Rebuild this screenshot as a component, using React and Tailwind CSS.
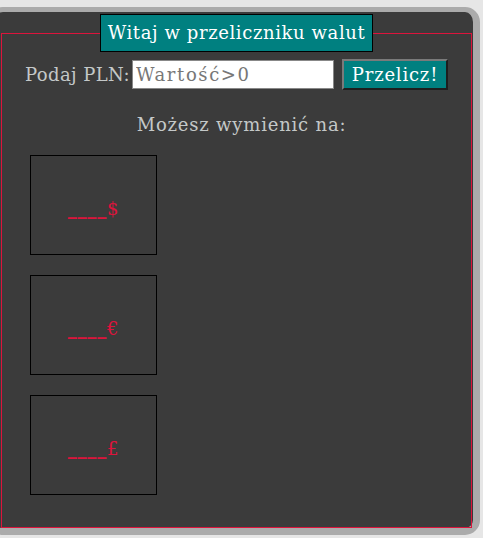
const serif = { fontFamily: '"DejaVu Serif", "Liberation Serif", serif' };

function CurrencyBox({ symbol }) {
    return (
        <div className="flex h-[100px] w-[127px] items-center justify-center border border-solid border-black">
            <span className="pt-[6px] text-[18px] tracking-[0.8px] text-[#dc143c]">
                <span className="font-bold">____</span>
                {symbol}
            </span>
        </div>
    );
}

export default function App() {
    return (
        <div className="min-h-screen overflow-hidden bg-[#e6e6e6] pt-[7px]" style={serif}>
            <div className="ml-[-12px] h-[528px] w-[492px] rounded-[15px] border-[5px] border-r-[7px] border-b-[7px] border-[#ababab] bg-[#3b3b3b]">
                <fieldset className="ml-[8px] mr-[1px] mt-[2px] h-[514px] border border-solid border-[#dc143c] px-0">
                    <legend className="mx-auto border border-black bg-[#008080] px-[7px] py-[6px] text-[18px] leading-[24px] tracking-[0.6px] text-white">
                        Witaj w przeliczniku walut
                    </legend>

                    <div className="mt-[7px] flex items-center justify-center">
                        <span className="text-[18px] tracking-[0.4px] text-[#c4c8c8]">Podaj PLN:</span>
                        <input
                            className="ml-[2px] h-[29px] w-[202px] border border-[#888] bg-white px-[3px] text-[18px] tracking-[1.6px] text-black outline-none placeholder:text-[#777]"
                            placeholder="Wartość>0"
                        />
                        <button className="ml-[8px] h-[31px] w-[106px] border-2 border-t-[#7a7a7a] border-l-[#7a7a7a] border-b-[#1e1e1e] border-r-[#1e1e1e] bg-[#008080] text-[18px] tracking-[0.8px] text-white">
                            Przelicz!
                        </button>
                    </div>

                    <p className="mt-[21px] pl-[10px] text-center text-[18px] tracking-[0.8px] text-[#c4c8c8]">Możesz wymienić na:</p>

                    <div className="ml-[28px] mt-[17px] flex flex-col gap-[20px]">
                        <CurrencyBox symbol="$" />
                        <CurrencyBox symbol="€" />
                        <CurrencyBox symbol="£" />
                    </div>
                </fieldset>
            </div>
        </div>
    );
}
